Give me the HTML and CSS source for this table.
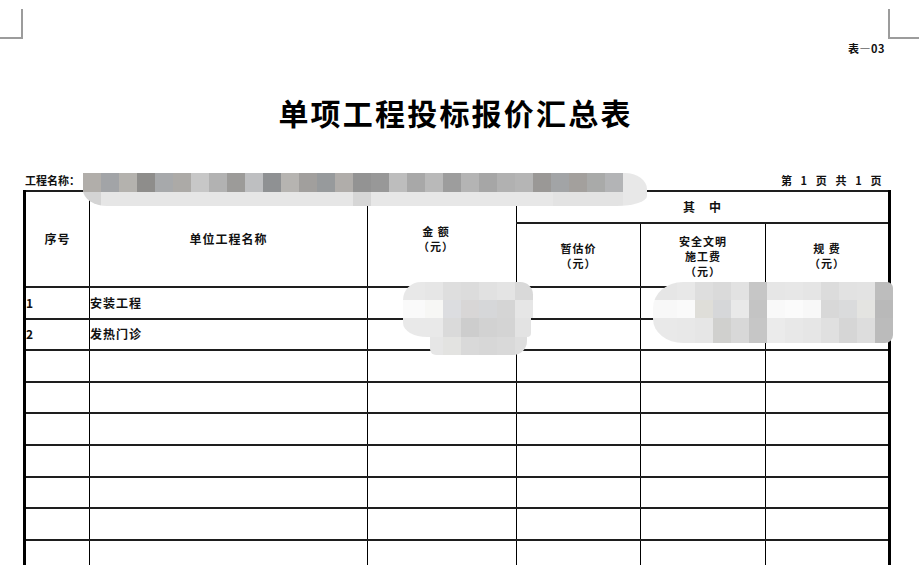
FILE: index.html
```html
<!DOCTYPE html>
<html lang="zh-CN">
<head>
<meta charset="utf-8">
<title>单项工程投标报价汇总表</title>
<link rel="stylesheet" href="styles.css">
</head>
<body>
<div class="page">
  <div class="crop-row">
    <span class="crop crop-l"></span>
    <span class="crop crop-r"></span>
  </div>
  <div class="sheet-no">表—03</div>
  <div class="sheet">
    <h1 class="title">单项工程投标报价汇总表</h1>
    <div class="meta">
      <span class="proj">工程名称：</span>
      <span class="pages">第 1 页 共 1 页</span>
    </div>
    <table class="summary">
      <colgroup>
        <col class="c-no"><col class="c-name"><col class="c-amt"><col class="c-est"><col class="c-safe"><col class="c-fee">
      </colgroup>
      <thead>
        <tr class="hr1">
          <th rowspan="2">序号</th>
          <th rowspan="2">单位工程名称</th>
          <th rowspan="2" class="amt"><span class="ln">金 额</span><span class="ln">（元）</span></th>
          <th colspan="3" class="among">其　中</th>
        </tr>
        <tr class="hr2">
          <th class="sub"><span class="ln">暂估价</span><span class="ln">（元）</span></th>
          <th class="sub sub3"><span class="ln">安全文明</span><span class="ln">施工费</span><span class="ln">（元）</span></th>
          <th class="sub"><span class="ln">规 费</span><span class="ln">（元）</span></th>
        </tr>
      </thead>
      <tbody>
        <tr><td class="no">1</td><td class="name">安装工程</td><td></td><td></td><td></td><td></td></tr>
        <tr><td class="no">2</td><td class="name">发热门诊</td><td></td><td></td><td></td><td></td></tr>
        <tr><td></td><td></td><td></td><td></td><td></td><td></td></tr>
        <tr><td></td><td></td><td></td><td></td><td></td><td></td></tr>
        <tr><td></td><td></td><td></td><td></td><td></td><td></td></tr>
        <tr><td></td><td></td><td></td><td></td><td></td><td></td></tr>
        <tr><td></td><td></td><td></td><td></td><td></td><td></td></tr>
        <tr><td></td><td></td><td></td><td></td><td></td><td></td></tr>
        <tr><td></td><td></td><td></td><td></td><td></td><td></td></tr>
      </tbody>
    </table>
  </div>

  <div class="mosaic m-top">
    <div class="mt-band"></div>
    <div class="mt-row"></div>
  </div>

  <div class="mosaic blob1">
    <div class="b1r b1r1"></div>
    <div class="b1r b1r2"></div>
    <div class="b1r b1r3"></div>
    <div class="b1r b1r4"></div>
  </div>

  <div class="mosaic blob2">
    <div class="b2r b2r1"></div>
    <div class="b2r b2r2"></div>
    <div class="b2r b2r3"></div>
  </div>
</div>
</body>
</html>
```

FILE: styles.css
```css
html, body {
  margin: 0;
  padding: 0;
  background: #fff;
}

body {
  font-family: "Noto Sans CJK SC", "Liberation Sans", sans-serif;
  color: #111;
}

.page {
  position: relative;
  width: 923px;
  height: 565px;
  overflow: hidden;
}

/* crop marks */
.crop-row {
  display: flex;
  justify-content: space-between;
  align-items: flex-start;
  height: 38px;
}

.crop {
  display: block;
  height: 28px;
  margin-top: 9px;
  border-bottom: 2px solid #9c9c9c;
}

.crop-l {
  width: 21px;
  border-right: 2px solid #9c9c9c;
}

.crop-r {
  width: 29px;
  margin-right: 4px;
  border-left: 2px solid #9c9c9c;
}

.sheet-no {
  margin-top: 3px;
  padding-right: 38px;
  text-align: right;
  font-size: 11px;
  line-height: 14px;
  font-weight: 700;
  letter-spacing: 0.5px;
}

.sheet {
  margin-left: 23px;
  width: 865px;
}

.title {
  margin: 37px 0 0;
  text-align: center;
  font-size: 30px;
  line-height: 40px;
  font-weight: 700;
  letter-spacing: 2.2px;
  color: #000;
}

.meta {
  display: flex;
  justify-content: space-between;
  margin-top: 41px;
  padding: 0 4px 0 2px;
  font-size: 11px;
  line-height: 14px;
  font-weight: 700;
}

.pages {
  letter-spacing: 2.6px;
  word-spacing: 1px;
}

/* table */
.summary {
  margin-top: 3px;
  width: 865px;
  table-layout: fixed;
  border-collapse: collapse;
  border-top: 2px solid #000;
  border-left: 3px solid #000;
  border-right: 3px solid #000;
}

.c-no { width: 65px; }
.c-name { width: 278px; }
.c-amt { width: 149px; }
.c-est { width: 124px; }
.c-safe { width: 125px; }
.c-fee { width: 124px; }

.summary th,
.summary td {
  padding: 0;
  border-left: 1px solid #000;
  border-right: 1px solid #000;
  border-top: 2px solid #1e1e1e;
  border-bottom: 2px solid #1e1e1e;
  font-size: 12px;
  line-height: 14px;
  letter-spacing: 1px;
}

.summary th {
  font-weight: 700;
  text-align: center;
  vertical-align: middle;
}

.ln {
  display: block;
}

.hr1 { height: 32px; }
.hr2 { height: 64px; }
.summary tbody tr { height: 31.6px; }

.summary .amt {
  padding-right: 12px;
  font-size: 11px;
  line-height: 15px;
}

.among {
  letter-spacing: 6px;
}

.summary .sub {
  font-size: 11px;
  line-height: 15px;
  padding-top: 1px;
}

.summary .sub3 {
  padding-top: 2px;
}

.summary td {
  font-weight: 700;
  text-align: left;
  vertical-align: middle;
}

.no { padding-left: 2px; }
.name { padding-left: 2px; }

/* pixelated redaction overlays */
.mosaic {
  position: absolute;
}

.m-top {
  left: 83px;
  top: 173px;
  width: 564px;
  height: 34px;
}

.mt-band {
  position: absolute;
  left: 0;
  top: 0;
  width: 564px;
  height: 33px;
  border-radius: 0 22px 30px 24px / 0 16px 10px 16px;
  background:
    linear-gradient(to right,
      #d4d4d4 0 18px, #e6e6e6 18px 270px, #d6d6d6 270px 288px,
      #e7e7e7 288px 470px, #e3e3e3 470px 540px, #e8e8e8 540px);
}

.mt-row {
  position: absolute;
  left: 0;
  top: 0;
  width: 540px;
  height: 19px;
  background: linear-gradient(to right,
    #b1aeaa 0 18px, #a2a4a7 18px 36px, #b4b2ae 36px 54px, #8e8d8b 54px 72px,
    #a7a9ab 72px 90px, #acaaa7 90px 108px, #c7c7c7 108px 126px, #b2b2b2 126px 144px,
    #9c9b99 144px 162px, #bebfc1 162px 180px, #8f9193 180px 198px, #b6b4b1 198px 216px,
    #a19f9d 216px 234px, #979a9c 234px 252px, #b0adaa 252px 270px, #939393 270px 288px,
    #989898 288px 306px, #bdbdbd 306px 324px, #a8a8a8 324px 342px, #b9b9b9 342px 360px,
    #9d9d9d 360px 378px, #b4b4b4 378px 396px, #a6a6a6 396px 414px, #b1b1b1 414px 432px,
    #b5b5b5 432px 450px, #9a9896 450px 468px, #a2a4a6 468px 486px, #a3a09d 486px 504px,
    #a9aaa9 504px 522px, #b3b4b6 522px 540px);
}

.blob1 {
  left: 403px;
  top: 282px;
  width: 130px;
  height: 73px;
}

.b1r {
  height: 18px;
  background-repeat: no-repeat;
}

.b1r1 {
  border-radius: 20px 14px 0 0;
  background-image: linear-gradient(to right,
    #e8e8e8 0 22px, #e6e6e6 22px 40px, #dedede 40px 58px, #dcdcdc 58px 76px,
    #e1e1e1 76px 94px, #e4e4e4 94px 112px, #d9d9d9 112px);
}

.b1r2 {
  background-image: linear-gradient(to right,
    #fafafa 0 22px, #f7f7f5 22px 40px, #dcdde0 40px 58px, #d8d6d6 58px 76px,
    #d6d7d9 76px 94px, #d5d5d5 94px 112px, #e6e6e6 112px);
}

.b1r3 {
  height: 19px;
  width: 128px;
  border-radius: 0 0 4px 24px / 0 0 4px 14px;
  background-image: linear-gradient(to right,
    #e9e9e9 0 22px, #e9e9e9 22px 40px, #dadada 40px 58px, #cdcdcd 58px 76px,
    #d2d2d2 76px 94px, #d4d4d4 94px 112px, #e3e3e3 112px);
}

.b1r4 {
  margin-left: 27px;
  width: 97px;
  border-radius: 0 0 14px 6px;
  background-image: linear-gradient(to right,
    #e6e6e6 0 13px, #e3e3e1 13px 31px, #d9d9d9 31px 49px, #d7d7d7 49px 67px,
    #d9d9d9 67px 85px, #dedede 85px);
}

.blob2 {
  left: 653px;
  top: 282px;
  width: 240px;
  height: 61px;
  overflow: hidden;
  border-radius: 30px 6px 8px 30px / 26px 6px 8px 24px;
}

.b2r {
  height: 18px;
}

.b2r1 {
  background: linear-gradient(to right,
    #e6e6e6 0 24px, #e8e8e8 24px 42px, #dedede 42px 60px, #dadada 60px 78px,
    #e2e2e2 78px 96px, #c6c6c6 96px 114px, #e6e6e6 114px 132px, #e7e7e7 132px 150px,
    #e5e5e5 150px 168px, #dcdcdc 168px 186px, #e2e2e2 186px 204px, #e3e3e3 204px 222px,
    #bdbdbd 222px);
}

.b2r2 {
  background: linear-gradient(to right,
    #f8f8f8 0 24px, #fafafa 24px 42px, #dfded9 42px 60px, #d6d7d9 60px 78px,
    #e9e9e9 78px 96px, #c4c4c4 96px 114px, #f9f9f9 114px 132px, #fbfbfb 132px 150px,
    #f8f8f8 150px 168px, #d8d8d8 168px 186px, #dadbdc 186px 204px, #e4e4e1 204px 222px,
    #b9b9b9 222px);
}

.b2r3 {
  height: 25px;
  background: linear-gradient(to right,
    #e9e9e9 0 24px, #e8e8e8 24px 42px, #e6e6e6 42px 60px, #d0d0ce 60px 78px,
    #d8d8d8 78px 96px, #c6c6c6 96px 114px, #ebebeb 114px 132px, #e8e8e8 132px 150px,
    #e6e6e6 150px 168px, #e0e0e0 168px 186px, #d6d6d6 186px 204px, #dddddd 204px 222px,
    #bbbbbb 222px);
}
```
